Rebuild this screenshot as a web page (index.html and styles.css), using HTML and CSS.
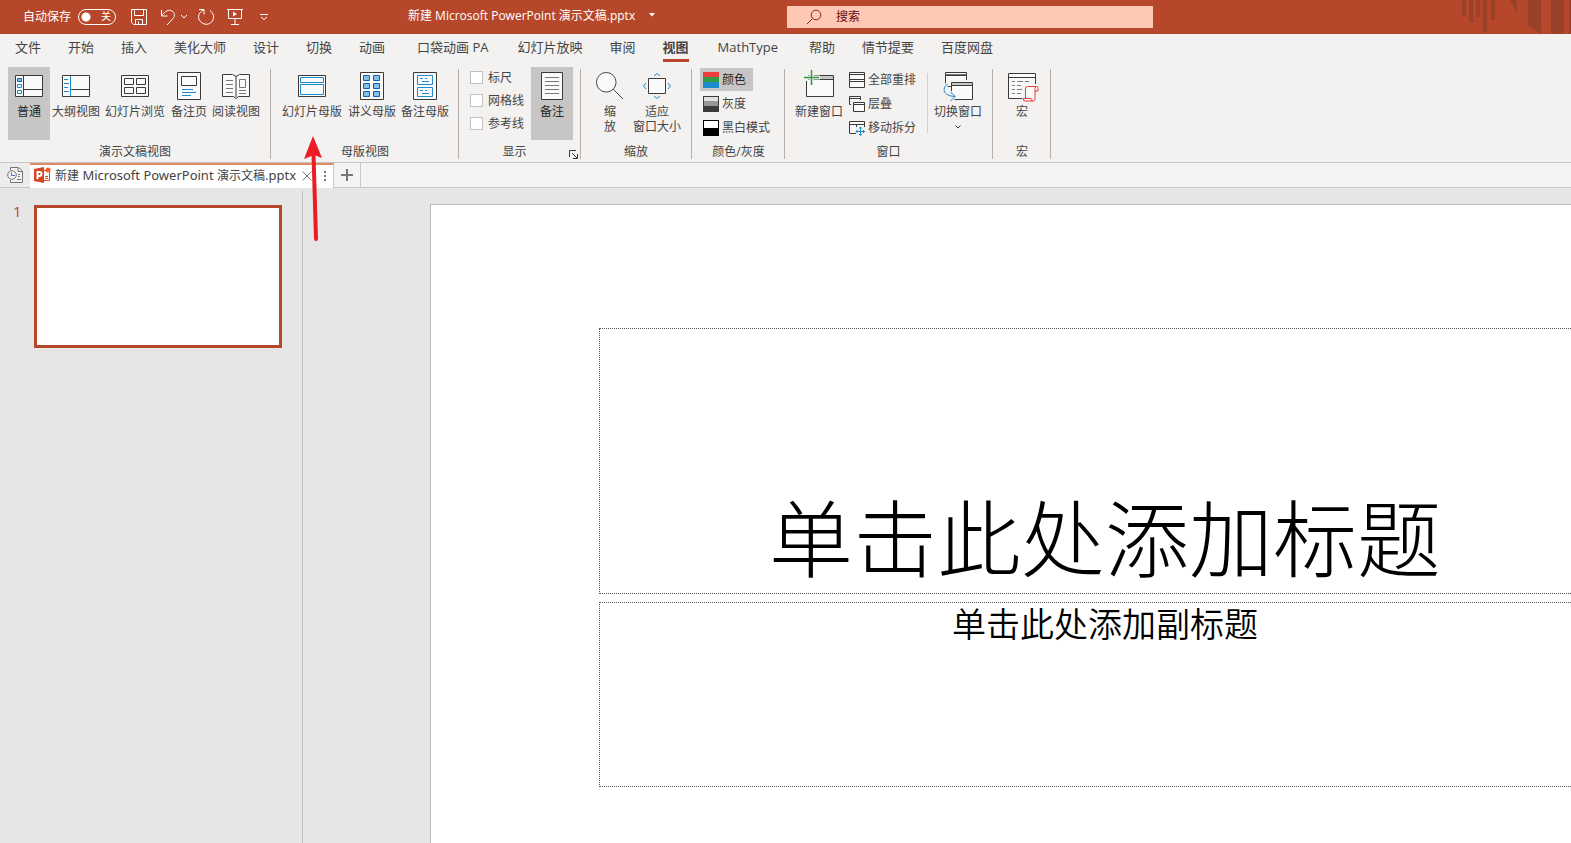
FILE: index.html
```html
<!DOCTYPE html>
<html lang="zh-CN">
<head>
<meta charset="utf-8">
<title>新建 Microsoft PowerPoint 演示文稿.pptx</title>
<link rel="stylesheet" href="styles.css">
</head>
<body>
<div class="app">
  <header class="titlebar">
    <div class="quick">
      <label class="autosave" for="autosave">自动保存</label>
      <span class="switch"><input id="autosave" type="checkbox"><span class="switch-text">关</span></span>
      <button class="q-save" aria-label="保存"><svg width="18" height="18" viewBox="0 0 18 18"><path d="M1.500 1.500h15v15h-13l-2-2zM4.500 1.500v6h9v-6M5.500 16.500v-5h7v5M8.500 13.500v3"/></svg></button>
      <button class="q-undo" aria-label="撤消"><svg width="16" height="18" viewBox="0 0 16 18"><path d="M1.500 2v6h6M1.500 8C5 3 9 1 12 3c3 2 3 5 1 7.500L7 17"/></svg></button>
      <button class="q-more" aria-label="撤消选项"><svg width="8" height="6" viewBox="0 0 8 6"><path d="M1 1l3 3 3-3"/></svg></button>
      <button class="q-redo" aria-label="重复"><svg width="18" height="18" viewBox="0 0 18 18"><path d="M2 1.500h5v5M6.500 2C2 4 0 9 3 13c3 4 9 4.500 12 .5 3-4 1.500-8.500-2-11"/></svg></button>
      <button class="q-show" aria-label="从头开始"><svg width="16" height="18" viewBox="0 0 16 18"><path d="M0 1.500h16M1.500 1.500v9h13v-9M8 10.500v6M4 16.500h8"/><path class="solid" d="M6 3.500l4 2.500-4 2.500z"/></svg></button>
      <button class="q-custom" aria-label="自定义快速访问工具栏"><svg width="8" height="8" viewBox="0 0 8 8"><path d="M0 1.500h8M1 4l3 2.500L7 4"/></svg></button>
    </div>
    <button class="doc-title">新建 Microsoft PowerPoint 演示文稿.pptx<svg width="6" height="4" viewBox="0 0 6 4"><path class="solid" d="M0 0h6L3 3.500z"/></svg></button>
    <div class="search">
      <svg width="16" height="16" viewBox="0 0 16 16"><circle cx="10" cy="6" r="4.800"/><path d="M6.500 9.500L1 15"/></svg>
      <input type="text" aria-label="搜索" placeholder="搜索">
    </div>
    <div class="decor">
      <svg width="111" height="34" viewBox="0 0 111 34"><path d="M2 0h4v16H2zM9 0h4v23H9zM16 0h4v17h-4zM23 0h4v32h-4zM31 0h4v20h-4zM50 0h7v14zM68 0h13v34l-13-8zM91 0h13v34H91zM109 0h2v34h-2z"/></svg>
    </div>
  </header>

  <nav class="tabs">
    <button>文件</button><button>开始</button><button>插入</button><button>美化大师</button><button>设计</button><button>切换</button><button>动画</button><button class="addin">口袋动画 PA</button><button>幻灯片放映</button><button>审阅</button><button class="active">视图</button><button class="latin">MathType</button><button>帮助</button><button>情节提要</button><button>百度网盘</button>
  </nav>

  <section class="ribbon">
    <div class="group g-views">
      <div class="tools">
        <button class="big w-s on"><svg width="30" height="28" viewBox="0 0 30 28"><path class="paper" d="M1.500 3.500h27v21h-27z"/><path class="ink" d="M9.500 3.500v21M9.500 17.500h19"/><path class="bluefill" d="M3.500 6.500h4v3h-4z"/><path class="blue" d="M3.500 12.500h4v3h-4zM3.500 18.500h4v3h-4z"/></svg><span>普通</span></button>
        <button class="big w-m"><svg width="30" height="28" viewBox="0 0 30 28"><path class="paper" d="M1.500 3.500h27v21h-27z"/><path class="ink" d="M9.500 17.500h19"/><path class="blue" d="M9.500 4v20M3 7.500h4M3 11.500h5M3 15.500h4M3 19.500h5"/></svg><span>大纲视图</span></button>
        <button class="big w-l"><svg width="30" height="28" viewBox="0 0 30 28"><path class="paper" d="M1.500 3.500h27v21h-27z"/><path class="paper" d="M4.500 6.500h9v6h-9zM16.500 6.500h9v6h-9zM4.500 15.500h9v6h-9zM16.500 15.500h9v6h-9z"/></svg><span>幻灯片浏览</span></button>
        <button class="big w-s"><svg width="30" height="28" viewBox="0 0 30 28"><path class="paper" d="M3.500.5h23v27h-23zM7.500 4.500h15v9h-15z"/><path class="blue" d="M8 17.500h11M8 20.500h14M8 23.500h9"/></svg><span>备注页</span></button>
        <button class="big w-m"><svg width="30" height="28" viewBox="0 0 30 28"><path class="paper" d="M1.500 2.500h10l3.500 2 3.500-2h10v22h-11l-2.500 2-2.500-2h-11z"/><path class="ink" d="M15 4v21"/><path class="gray" d="M5 8.500h7M5 12.500h7M5 16.500h7M5 20.500h7M18.500 7.500h6v8h-6zM18 18.500h7M18 21.500h7"/></svg><span>阅读视图</span></button>
      </div>
      <div class="caption">演示文稿视图</div>
    </div>
    <div class="group g-master">
      <div class="tools">
        <button class="big w-l"><svg width="30" height="28" viewBox="0 0 30 28"><path class="paper" d="M1.500 3.500h27v21h-27z"/><path class="blue" d="M3.500 5.500h23v5h-23zM3.500 12.500h23v10h-23z"/></svg><span>幻灯片母版</span></button>
        <button class="big w-m"><svg width="30" height="28" viewBox="0 0 30 28"><path class="paper" d="M3.500.5h23v27h-23z"/><path class="bluefill" d="M6.500 3.500h6v5h-6zM16.500 3.500h6v5h-6zM6.500 11.500h6v5h-6zM16.500 11.500h6v5h-6zM6.500 19.500h6v5h-6zM16.500 19.500h6v5h-6z"/></svg><span>讲义母版</span></button>
        <button class="big w-m"><svg width="30" height="28" viewBox="0 0 30 28"><path class="paper" d="M3.500.5h23v27h-23z"/><path class="blue" d="M7.500 3.500h15v9h-15zM7.500 15.500h15v9h-15zM10 6.500h3M12 9.500h7M15 6.500h2M10 18.500h3M12 21.500h7M15 18.500h2"/></svg><span>备注母版</span></button>
      </div>
      <div class="caption">母版视图</div>
    </div>
    <div class="group g-show">
      <div class="tools">
        <div class="checks">
          <label><input type="checkbox">标尺</label>
          <label><input type="checkbox">网格线</label>
          <label><input type="checkbox">参考线</label>
        </div>
        <button class="big w-s on"><svg width="30" height="28" viewBox="0 0 30 28"><path class="paper" d="M4.500.5h21v27h-21z"/><path class="gray" d="M8 5.500h14M8 9.500h14M8 13.500h14M8 17.500h14M8 21.500h14"/></svg><span>备注</span></button>
      </div>
      <div class="caption">显示</div>
      <button class="launcher" aria-label="网格设置"><svg width="9" height="9" viewBox="0 0 9 9"><path class="ink" d="M.5 7V.5H7M3 3l5 5M8.500 4v4.500H4"/></svg></button>
    </div>
    <div class="group g-zoom">
      <div class="tools">
        <button class="big w-s"><svg width="30" height="30" viewBox="0 0 30 30"><circle class="paper" cx="11" cy="11" r="10.500"/><path class="ink" d="M18.500 18.500L29 29"/></svg><span>缩<br>放</span></button>
        <button class="big w-m"><svg width="30" height="28" viewBox="0 0 30 28"><path class="paper" d="M6.500 6.500h17v15h-17z"/><path class="blue" d="M12 4l3-2.500L18 4M12 24l3 2.500 3-2.500M4 11l-2.500 3L4 17M26 11l2.500 3-2.500 3"/></svg><span>适应<br>窗口大小</span></button>
      </div>
      <div class="caption">缩放</div>
    </div>
    <div class="group g-color">
      <div class="tools rows">
        <button class="small on"><svg width="16" height="16" viewBox="0 0 16 16"><path fill="#ed3d3b" d="M0 0h16v5H0z"/><path fill="#309b48" d="M0 5h16v5H0z"/><path fill="#1e8bcd" d="M0 10h16v6H0z"/></svg>颜色</button>
        <button class="small"><svg width="16" height="16" viewBox="0 0 16 16"><path fill="#3b3b3b" d="M0 0h16v16H0z"/><path fill="#e1e1e1" d="M1 1h14v4H1z"/><path fill="#979797" d="M1 5h14v5H1z"/></svg>灰度</button>
        <button class="small"><svg width="16" height="16" viewBox="0 0 16 16"><path fill="#000" d="M0 0h16v16H0z"/><path fill="#fff" d="M1 1h14v7H1z"/></svg>黑白模式</button>
      </div>
      <div class="caption">颜色/灰度</div>
    </div>
    <div class="group g-window">
      <div class="tools">
        <button class="big w-m"><svg width="32" height="28" viewBox="0 0 32 28"><path class="paper" d="M3.500 3.500h27v21h-27z"/><path fill="#c8c6c4" d="M4 4h26v3H4z"/><path class="ink" d="M4 7.500h26"/><path class="halo" d="M8.500-2v15M0 5.500h17M3 0v9"/><path class="green" d="M8.500-2v15M1 5.500h15"/></svg><span>新建窗口</span></button>
        <div class="rows">
          <button class="small"><svg width="16" height="16" viewBox="0 0 16 16"><path class="paper" d="M.5.500h15v7H.5zM.5 7.500h15v8H.5z"/><path class="ink" d="M0 2.500h16M0 9.500h16"/></svg>全部重排</button>
          <button class="small"><svg width="16" height="16" viewBox="0 0 16 16"><path class="paper" d="M.5.500h11v8H.5z"/><path class="ink" d="M1 2.500h10"/><path class="halo" d="M4 6h9M4 5v5"/><path class="paper" d="M4.500 6.500h11v9h-11z"/><path class="ink" d="M5 8.500h10"/></svg>层叠</button>
          <button class="small"><svg width="16" height="16" viewBox="0 0 16 16"><path class="paper" d="M.5 1.500h15v12H.5z"/><path class="ink" d="M1 4.500h14M7.500 5v8"/><path class="halo" d="M11.500 6v10M7 11.500h9M9 9h5v5H9z"/><path class="blue" d="M11.500 7v8.500M7 11.500h9M10 8.500l1.500-1.500L13 8.500M10 14l1.500 1.500L13 14M8.500 10L7 11.500 8.500 13M14 10l1.500 1.500L14 13"/></svg>移动拆分</button>
        </div>
        <div class="divider"></div>
        <button class="big w-m"><svg width="32" height="28" viewBox="0 0 32 28"><path class="paper" d="M3.500.5h21v14h-21z"/><path class="gray" d="M4 2.500h20"/><path class="ink" d="M4 3.500h20"/><path class="halo" d="M8 10h18"/><path class="paper" d="M9.500 10.500h21v17h-21z"/><path fill="#c8c6c4" d="M10 11h20v2H10z"/><path class="ink" d="M10 13.500h20"/><path class="halo" d="M6 12C0 15 0 24 12 24.500M8.500 20l4 4.500-4 4.500"/><path class="blue" d="M6 12C0 15 0 24 13 24.500M8.500 20l4.500 4.500L8.500 29"/></svg><span>切换窗口</span><svg class="chev" width="6" height="4" viewBox="0 0 6 4"><path class="ink" d="M.5.500L3 3 5.500.500"/></svg></button>
      </div>
      <div class="caption">窗口</div>
    </div>
    <div class="group g-macro">
      <div class="tools">
        <button class="big w-s"><svg width="30" height="28" viewBox="0 0 30 28"><path class="paper" d="M1.500 1.500h27v25h-27z"/><path class="ink" d="M2 5.500h26"/><path class="gray" d="M5 9.500h3M10 9.500h6M18 9.500h4M5 13.500h3M10 13.500h4M5 17.500h3M10 17.500h6M5 21.500h3M10 21.500h4"/><path class="halo" d="M17 14v15M28.500 12v17M16 28h14"/><path class="redpaper" d="M18.500 26.500v-9.500q0-2.500 2-2.500h9q1.500 0 1.500 2v2.500h-3v7.500q0 2.500-2 2.500h-8q-2 0-2-2.500h8q0 2.500 2 2.500M28 19v-2.500q0-2 1.500-2"/></svg><span>宏</span></button>
      </div>
      <div class="caption">宏</div>
    </div>
  </section>

  <div class="docbar">
    <button class="history" aria-label="历史文档"><svg width="16" height="16" viewBox="0 0 16 16"><path class="file" d="M3.500 3V.500h8l4 3.500v11.500h-12V13M11 1v3.500h4M11 7.500h2M11 9.500h2M10 12.500h4"/><circle class="file" cx="5" cy="8" r="4.300"/><path class="hand" d="M4.500 5.500v3H8"/></svg></button>
    <div class="doctab">
      <svg width="17" height="17" viewBox="0 0 17 17"><path fill="#d24625" d="M0 2l10-2v16L0 14z"/><path fill="none" stroke="#d24625" d="M10 3.500h5.500v10H10M11 9.500h3M11 11.500h3"/><path fill="none" stroke="#fff" stroke-width="2" d="M3.500 12V5h2q2 0 2 2t-2 2h-2"/><circle cx="14" cy="3" r="2.500" fill="#ff5a1f"/></svg>
      <span class="name">新建<span class="en"> Microsoft PowerPoint </span>演示文稿<span class="en">.pptx</span></span>
      <button class="close" aria-label="关闭"><svg width="10" height="10" viewBox="0 0 10 10"><path d="M.5.500l9 9M9.500.500l-9 9"/></svg></button>
      <button class="dots" aria-label="更多"><svg width="2" height="10" viewBox="0 0 2 10"><path d="M0 0h2v2H0zM0 4h2v2H0zM0 8h2v2H0z"/></svg></button>
    </div>
    <button class="add" aria-label="新建"><svg width="12" height="12" viewBox="0 0 12 12"><path d="M6 0v12M0 6h12"/></svg></button>
  </div>

  <main class="work">
    <aside class="thumbs">
      <span class="num">1</span>
      <button class="thumb" aria-label="幻灯片 1"></button>
    </aside>
    <div class="stage">
      <div class="slide">
        <h1 class="holder title">单击此处添加标题</h1>
        <p class="holder subtitle">单击此处添加副标题</p>
      </div>
    </div>
  </main>

  <svg class="arrow" width="20" height="108" viewBox="0 0 20 108"><path class="shaft" d="M9.500 18L12 103"/><path class="head" d="M9 0l9 22-8-3-10 4z"/></svg>
</div>
</body>
</html>
```
FILE: styles.css
```css
* { box-sizing: border-box; }

body {
  margin: 0;
  font-family: "Open Sans", "Noto Sans CJK SC", sans-serif;
  font-size: 12px;
  line-height: 15px;
  color: #444;
}

button {
  margin: 0;
  padding: 0;
  border: 0;
  background: none;
  color: inherit;
  font: inherit;
  white-space: nowrap;
}

svg { display: block; flex: none; overflow: visible; }

.app {
  position: relative;
  display: flex;
  flex-direction: column;
  height: 100vh;
  overflow: hidden;
  background: #e6e6e6;
}

/* Title bar */
.titlebar {
  display: grid;
  grid-template-columns: 408fr 379fr 366fr 418fr;
  flex: none;
  height: 34px;
  background: #b7472a;
  color: #fff;
}
.titlebar svg { fill: none; stroke: #fff; }
.titlebar .solid { fill: #fff; stroke: none; }

.quick { display: flex; align-items: center; padding-left: 23px; white-space: nowrap; }
.autosave { padding-bottom: 2px; }
.switch { position: relative; width: 38px; height: 16px; margin-left: 7px; }
.switch input {
  appearance: none;
  display: block;
  width: 38px;
  height: 16px;
  margin: 0;
  border: 1px solid #fff;
  border-radius: 8px;
  background: radial-gradient(circle at 7px 7px, #fff 4px, transparent 5px);
}
.switch-text {
  position: absolute;
  top: 0;
  right: 5px;
  font-size: 10px;
  pointer-events: none;
}
.q-save { margin-left: 14px; }
.q-undo { margin-left: 12px; }
.q-more { margin-left: 4px; }
.q-redo { margin-left: 9px; }
.q-show { margin-left: 12px; }
.q-custom { margin-left: 17px; }

.doc-title { display: flex; align-items: center; gap: 14px; padding-bottom: 4px; }

.search {
  display: flex;
  align-items: center;
  gap: 14px;
  height: 22px;
  margin-top: 6px;
  padding-left: 19px;
  background: #fdc9b5;
}
.search svg { stroke: #8c2a1c; }
.search input {
  flex: 1;
  min-width: 0;
  padding: 0 0 2px;
  border: 0;
  outline: 0;
  background: none;
  color: #6e0811;
  font: inherit;
}
.search input::placeholder { color: #6e0811; opacity: 1; }

.decor { display: flex; justify-content: flex-end; overflow: hidden; }
.decor svg { fill: #9a4129; stroke: none; }

/* Ribbon tabs */
.tabs {
  display: flex;
  flex: none;
  gap: 27px;
  height: 33px;
  padding: 0 15px;
  background: #f3f2f1;
  font-size: 13px;
}
.tabs button { padding: 3px 0 9px; }
.tabs .addin { padding-left: 5px; padding-right: 2px; }
.tabs .latin { padding-left: 2px; padding-right: 4px; }
.tabs .active {
  padding-bottom: 1px;
  border-bottom: 3px solid #b7472a;
  margin-bottom: 5px;
  font-weight: 700;
}

/* Ribbon */
.ribbon {
  display: flex;
  flex: none;
  height: 96px;
  border-bottom: 1px solid #c8c6c4;
  background: #f3f2f1;
}
.ribbon svg { fill: none; }
.group {
  position: relative;
  display: flex;
  flex-direction: column;
  justify-content: space-between;
  height: 92px;
  padding: 0 8px;
  background: linear-gradient(#b3b0ad, #b3b0ad) right bottom / 1px 90px no-repeat;
}
.tools { display: flex; align-items: flex-start; }
.caption { text-align: center; }

.big {
  display: flex;
  flex-direction: column;
  align-items: center;
  height: 73px;
  padding-top: 5px;
}
.big span { margin-top: 4px; text-align: center; }
.big svg { height: 28px; }
.big .chev { height: 4px; margin-top: 6px; }
.w-s { width: 42px; }
.w-m { width: 52px; }
.w-l { width: 66px; }
.on { background: #c8c6c4; color: #262626; }

.g-views { padding-right: 9px; }
.g-master .tools { gap: 1px; }
.g-show { padding-left: 11px; }
.g-show .caption { padding-right: 14px; }
.g-show .tools { justify-content: space-between; gap: 7px; }
.g-zoom { padding-right: 9px; }
.g-window { padding-right: 9px; }
.g-window .rows { margin-left: 1px; }

.checks { display: flex; flex-direction: column; gap: 8px; padding-top: 3px; }
.checks label { display: flex; align-items: center; gap: 5px; white-space: nowrap; }
.checks input {
  appearance: none;
  width: 13px;
  height: 13px;
  margin: 0;
  border: 1px solid #c3c1bf;
  background: #fff;
}
.launcher { position: absolute; right: 3px; bottom: 0; }

.rows { display: flex; flex-direction: column; align-items: flex-start; gap: 1px; }
.tools.rows, .tools > .rows { padding-top: 1px; }
.small { display: flex; align-items: center; gap: 3px; height: 23px; padding: 0 7px 0 3px; }
.divider { width: 1px; height: 60px; margin: 6px 4px 0; background: #d2d0ce; }

.paper { fill: #fafafa; stroke: #3b3a39; }
.ink { stroke: #3b3a39; }
.gray { stroke: #797775; }
.blue { stroke: #1e8bcd; }
.bluefill { fill: #83beec; stroke: #0f5fb0; }
.green { stroke: #309b48; stroke-width: 1.5; }
.halo { stroke: #f3f2f1; stroke-width: 4; }
.redpaper { fill: #fafafa; stroke: #ed3d3b; }

/* Document tabs */
.docbar {
  display: flex;
  flex: none;
  height: 25px;
  border-bottom: 1px solid #c8c8c8;
  background: #f3f3f3;
}
.history { display: flex; justify-content: center; align-items: center; width: 30px; background: #ececec; }
.file { fill: #f3f3f3; stroke: #777; }
.hand { fill: none; stroke: #4a6fc0; }
.doctab {
  display: flex;
  align-items: center;
  height: 25px;
  padding: 0 7px 2px 4px;
  border-top: 2px solid #e08a66;
  border-right: 1px solid #c8c8c8;
  background: #fff;
  font-family: "Noto Sans", "Noto Sans CJK SC", sans-serif;
  white-space: pre;
}
.name { margin-left: 4px; }
.en { font-size: 13px; }
.close { margin-left: 6px; }
.close svg { fill: none; stroke: #777; }
.dots { margin-left: 12px; }
.dots svg { fill: #777; }
.add { display: flex; align-items: center; justify-content: center; width: 27px; border-right: 1px solid #c8c8c8; }
.add svg { stroke: #777; stroke-width: 2; }

/* Workspace */
.work { display: flex; flex: 1; min-height: 0; }
.thumbs {
  display: flex;
  flex: none;
  align-items: flex-start;
  width: 303px;
  margin-top: 3px;
  padding: 14px 20px 0 13px;
  border-right: 1px solid #bebebe;
}
.num { flex: none; width: 21px; color: #c9472a; font-size: 15px; line-height: 13px; }
.thumb { flex: 1; height: 143px; border: 3px solid #b7472a; background: #fff; }

.stage { flex: 1; min-width: 0; padding: 16px 0 0 127px; overflow: hidden; }
.slide {
  display: flex;
  flex-direction: column;
  gap: 8px;
  width: 1350px;
  height: 760px;
  padding: 123px 168px 0;
  border: 1px solid #bdbdbd;
  background: #fff;
}
.holder {
  display: flex;
  justify-content: center;
  margin: 0;
  border: 1px dotted #555;
  color: #000;
  font-family: "Noto Sans CJK SC", sans-serif;
  font-weight: 300;
  white-space: nowrap;
}
.title { align-items: flex-end; height: 266px; padding-bottom: 12px; font-size: 84px; line-height: 92px; }
.subtitle { height: 185px; font-size: 34px; font-weight: 350; line-height: 40px; }

/* Callout arrow */
.arrow { position: absolute; left: 304px; top: 136px; pointer-events: none; }
.shaft { fill: none; stroke: #ed1c24; stroke-width: 4; stroke-linecap: round; }
.head { fill: #ed1c24; }
```
